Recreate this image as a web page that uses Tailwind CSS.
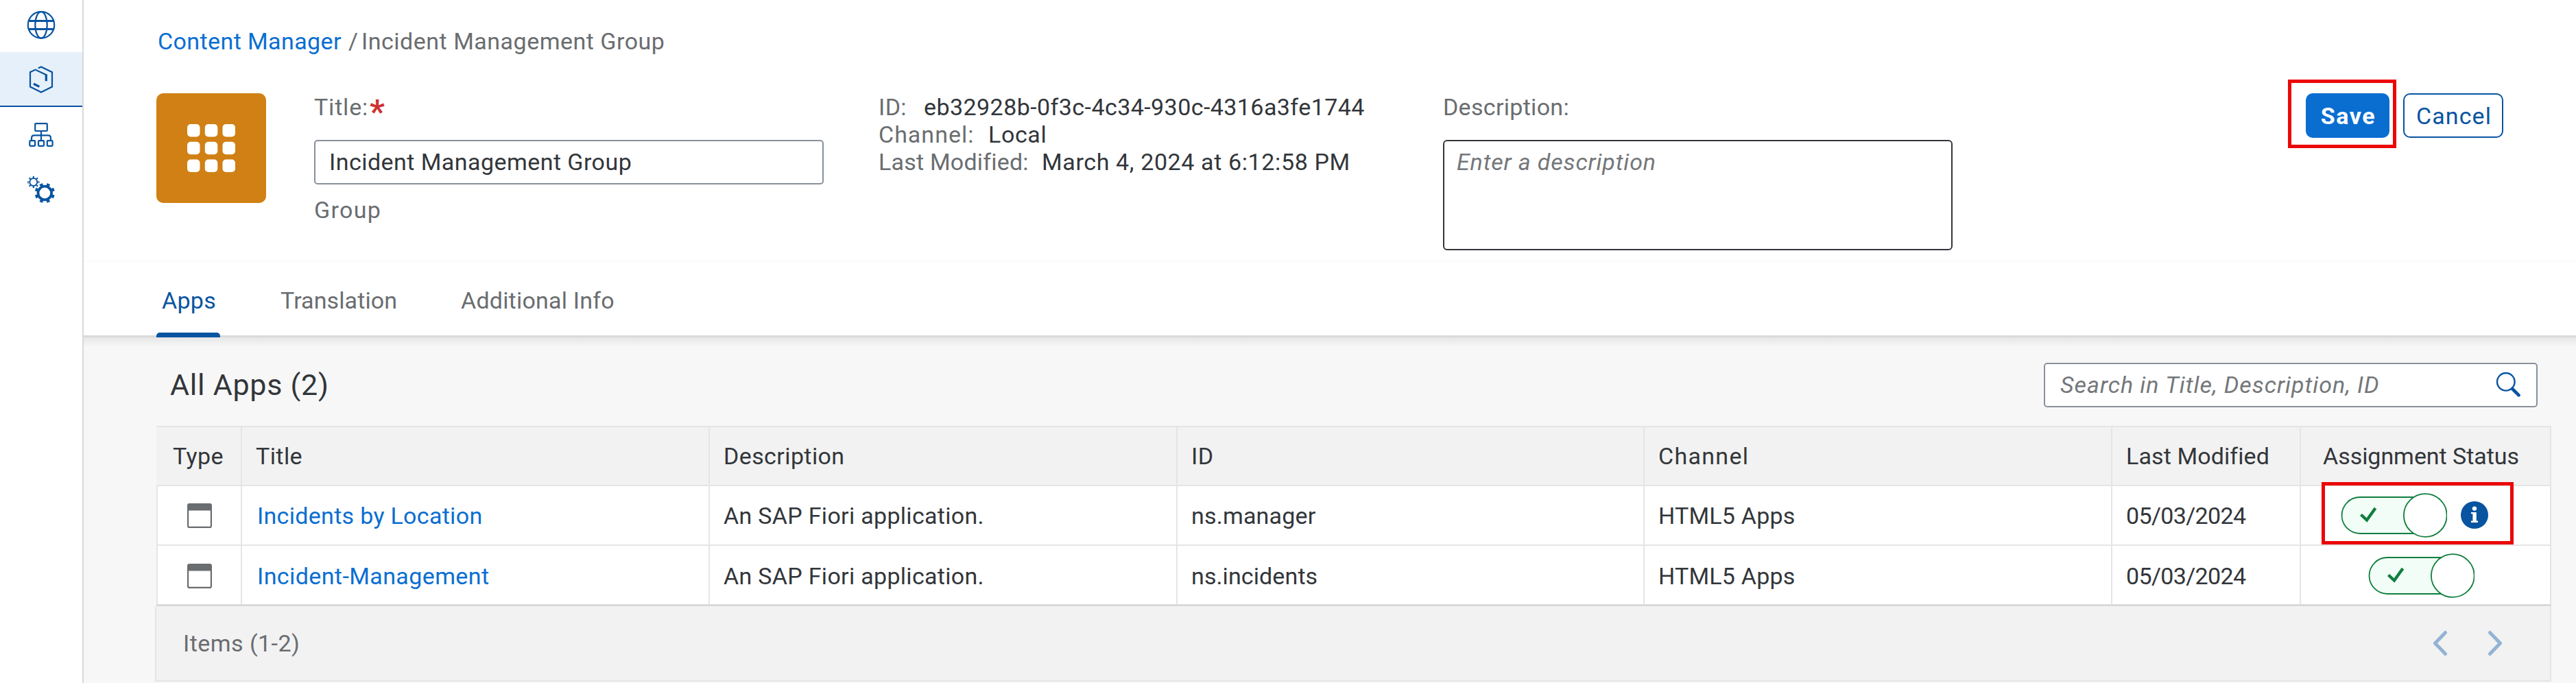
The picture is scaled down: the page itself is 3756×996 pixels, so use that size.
<!DOCTYPE html>
<html lang="en">
<head>
<meta charset="utf-8">
<title>Content Manager</title>
<script src="https://cdn.jsdelivr.net/npm/@tailwindcss/browser@4"></script>
</head>
<body class="w-[3756px] h-[996px] overflow-hidden flex bg-white font-[Roboto,sans-serif] text-[34px] leading-[40px] tracking-[0.4px] text-[#32363a] whitespace-nowrap">

<nav class="w-[122px] h-full shrink-0 border-r-2 border-[#d9d9d9] bg-white text-[#0854a0]">
  <a class="flex h-[76px] justify-center pt-[14px]">
    <svg class="w-11 h-11" viewBox="0 0 44 44" fill="none" stroke="currentColor" stroke-width="2.2"><circle cx="22" cy="22.4" r="19.2"/><ellipse cx="22" cy="22.4" rx="8.7" ry="19.2"/><path d="M4 16.4H40M4 28.4H40" stroke-width="3"/></svg>
  </a>
  <a class="flex h-20 justify-center pt-[18px] bg-[#e5f0fa] border-b-2 border-[#0854a0]">
    <svg class="w-11 h-11" viewBox="0 0 44 44" fill="none" stroke="currentColor" stroke-width="2.2"><path d="M17.8 5.4L22 3.4L38 11.2V32.6L22 40.6L6 32.6V11.2L13.5 7.6L29.5 15.2V18"/><path d="M29.3 14.5V24.2M11 28.2L19.4 32.4" stroke-width="3.2"/></svg>
  </a>
  <a class="flex h-20 justify-center pt-[18px]">
    <svg class="w-11 h-11" viewBox="0 0 44 44" fill="none" stroke="currentColor" stroke-width="2.2"><rect x="13.2" y="6.2" width="17.6" height="10.8" rx="1"/><path d="M22 17V31M8 31V27.5Q8 23.4 12 23.4H32Q36 23.4 36 27.5V31"/><rect x="5.3" y="31.2" width="7.8" height="7.6" rx="1"/><rect x="18" y="31.2" width="8" height="7.6" rx="1"/><rect x="30.8" y="31.2" width="7.8" height="7.6" rx="1"/></svg>
  </a>
  <a class="flex h-20 justify-center pt-[18px]">
    <svg class="w-11 h-11" viewBox="0 0 44 44" fill="none" stroke="currentColor"><circle cx="10.8" cy="11.5" r="5.5" stroke-width="1.9"/><circle cx="10.8" cy="11.5" r="7.4" stroke-width="2.6" pathLength="80" stroke-dasharray="3.6 6.4" transform="rotate(-8.1 10.8 11.5)"/><circle cx="27.3" cy="27.5" r="9.8" stroke-width="3.8"/><circle cx="27.3" cy="27.5" r="12.9" stroke-width="3.6" pathLength="80" stroke-dasharray="4.6 5.4" transform="rotate(12.1 27.3 27.5)"/></svg>
  </a>
</nav>

<main class="flex-1 flex flex-col bg-[#f7f7f7]">
  <header class="h-[382px] shrink-0 bg-white border-b-2 border-[#fbfbfb] pl-[106px] pt-10">
    <div class="flex">
      <a class="w-[282px] pl-[2px] text-[#0a6ed1]">Content Manager</a><span class="w-[18px] -ml-[2px] mr-[1px] text-[#6a6d70]">/</span><span class="text-[#6a6d70] tracking-[0.5px]">Incident Management Group</span>
    </div>
    <div class="flex mt-14">
      <div class="w-40 h-40 rounded-[10px] bg-[#d08014] flex items-center justify-center">
        <svg class="w-[70px] h-[70px]" viewBox="0 0 70 70" fill="#fff"><rect width="18.5" height="18.5" rx="5"/><rect x="25.8" width="18.5" height="18.5" rx="5"/><rect x="51.5" width="18.5" height="18.5" rx="5"/><rect y="25.8" width="18.5" height="18.5" rx="5"/><rect x="25.8" y="25.8" width="18.5" height="18.5" rx="5"/><rect x="51.5" y="25.8" width="18.5" height="18.5" rx="5"/><rect y="51.5" width="18.5" height="18.5" rx="5"/><rect x="25.8" y="51.5" width="18.5" height="18.5" rx="5"/><rect x="51.5" y="51.5" width="18.5" height="18.5" rx="5"/></svg>
      </div>
      <div class="w-[743px] ml-[70px] text-[#6a6d70]">
        <div class="flex"><span class="w-[81px] tracking-[0.8px]">Title:</span><span class="text-[#cc3333] font-bold text-[48px] pt-[7px] h-10">*</span></div>
        <div class="mt-7 h-[65px] border-2 border-[#89919a] rounded-[5px] bg-white pl-5 pt-[10px] text-[#32363a] tracking-[0.45px]">Incident Management Group</div>
        <div class="mt-[17px] tracking-[1.3px]">Group</div>
      </div>
      <dl class="w-[823px] pl-[80px]">
        <div class="flex"><dt class="w-[66px] text-[#6a6d70]">ID:</dt><dd class="tracking-[0.43px]">eb32928b-0f3c-4c34-930c-4316a3fe1744</dd></div>
        <div class="flex"><dt class="w-[160px] text-[#6a6d70] tracking-[1px]">Channel:</dt><dd class="tracking-[0.6px]">Local</dd></div>
        <div class="flex"><dt class="w-[238px] text-[#6a6d70] tracking-[0.2px]">Last Modified:</dt><dd class="tracking-[0.62px]">March 4, 2024 at 6:12:58 PM</dd></div>
      </dl>
      <div class="w-[743px] ml-[80px] text-[#6a6d70]">
        <div class="tracking-[0.3px]">Description:</div>
        <div class="mt-7 h-[161px] border-2 border-[#32363a] rounded-[6px] bg-white pl-[18px] pt-[10px] italic text-[#74777a] tracking-[0.84px]">Enter a description</div>
      </div>
      <div class="relative flex ml-[515px] gap-5">
        <button class="w-[122px] h-[65px] rounded-[10px] bg-[#0a6ed1] text-white font-bold pt-px pl-[2px] tracking-[1.6px]">Save</button>
        <button class="w-[146px] h-[65px] rounded-[10px] border-2 border-[#0854a0] text-[#0854a0] pt-px pl-[2px] tracking-[1.1px]">Cancel</button>
        <div class="absolute -left-[26px] -top-5 w-[158px] h-[100px] border-[5px] border-[#eb0707]"></div>
      </div>
    </div>
  </header>

  <div class="h-[110px] shrink-0 flex pl-[106px] bg-white border-b-[3px] border-[#dadada] text-[#6a6d70]">
    <div class="relative w-[93px] h-[107px] pt-9 pl-2 text-[#0854a0] tracking-[0.3px]">Apps<div class="absolute left-0 -bottom-[3px] w-[93px] h-[7px] rounded-t-[5px] bg-[#0854a0]"></div></div>
    <div class="pt-9 ml-[88px] w-[261px] tracking-[0.1px]">Translation</div>
    <div class="pt-9 ml-[2px] tracking-[0.2px]">Additional Info</div>
  </div>
  <div class="h-[14px] shrink-0 bg-linear-to-b from-[#e6e6e6] to-[#f7f7f7]"></div>

  <section class="w-[3494px] ml-[104px]">
    <div class="flex mt-[23px] h-[92px]">
      <h1 class="pl-[22px] pt-[7px] text-[43px] leading-[50px] tracking-[0.75px]">All Apps (2)</h1>
      <div class="ml-auto mr-5 w-[720px] h-[65px] flex justify-between border-2 border-[#89919a] rounded-[5px] bg-white pl-[22px] pr-[20px] pt-[10px] italic text-[#74777a] tracking-[0.96px]">Search in Title, Description, ID
        <svg class="w-10 h-10" viewBox="0 0 40 40" fill="none" stroke="#0854a0"><circle cx="15.8" cy="15.8" r="12.8" stroke-width="2.4"/><path d="M25.2 26L34.6 35.4" stroke-width="4.6" stroke-linecap="round"/></svg>
      </div>
    </div>

    <div class="ml-[2px] border-t-2 border-[#e5e5e5]">
      <div class="grid grid-cols-[125px_682px_682px_681px_682px_275px_365px] h-[86px] bg-[#f2f2f2] border-b-2 border-[#e5e5e5] *:border-r-2 *:border-[#e5e5e5] *:pt-[22px]">
        <div class="pl-6">Type</div><div class="pl-5">Title</div><div class="pl-5">Description</div><div class="pl-5">ID</div><div class="pl-5 tracking-[1.3px]">Channel</div><div class="pl-5 tracking-[0.1px]">Last Modified</div><div class="pl-8 tracking-[-0.05px]">Assignment Status</div>
      </div>
      <div class="grid grid-cols-[125px_682px_682px_681px_682px_275px_365px] h-[87px] bg-white border-b-2 border-[#e5e5e5] *:border-r-2 *:border-[#e5e5e5] *:pt-[23px]">
        <div class="border-l-2 pl-[43px]"><svg class="w-9 h-9 mt-[2px]" viewBox="0 0 36 36"><rect x="1.1" y="1.1" width="33.8" height="33.8" rx="2" fill="none" stroke="#6a6d70" stroke-width="2.2"/><path d="M1 2H35V10.5H1Z" fill="#6a6d70"/></svg></div>
        <div class="pl-[22px] text-[#0a6ed1] tracking-[0.3px]">Incidents by Location</div><div class="pl-5 tracking-[0.3px]">An SAP Fiori application.</div><div class="pl-5 tracking-[0.2px]">ns.manager</div><div class="pl-5 tracking-[0.2px]">HTML5 Apps</div><div class="pl-[20px] tracking-[-0.66px]">05/03/2024</div>
        <div class="relative">
          <div class="flex items-center gap-5 pl-[58px] -mt-[14px]">
            <svg class="w-[155px] h-[66px]" viewBox="0 0 155 66" stroke="#107e3e" stroke-width="1.8"><path d="M124 7H28A26.5 26.5 0 0 0 28 60H124Z" fill="#f1fdf6"/><circle cx="123.3" cy="33.5" r="31.4" fill="#fff"/><path d="M29.5 32.5L38 40.5L50.5 23" fill="none" stroke-width="4.4"/></svg>
            <svg class="w-10 h-10" viewBox="0 0 40 40"><circle cx="20" cy="20" r="20" fill="#0854a0"/><circle cx="20" cy="10.6" r="3.2" fill="#fff"/><path d="M15 16H22.8V28.6H25V31H15V28.6H17.4V18.2H15Z" fill="#fff"/></svg>
          </div>
          <div class="absolute left-[30px] -top-[6px] w-[280px] h-[91px] border-[5px] border-[#eb0707]"></div>
        </div>
      </div>
      <div class="grid grid-cols-[125px_682px_682px_681px_682px_275px_365px] h-[88px] bg-white border-b-[3px] border-[#d9d9d9] *:border-r-2 *:border-[#e5e5e5] *:pt-[24px]">
        <div class="border-l-2 pl-[43px]"><svg class="w-9 h-9 mt-[2px]" viewBox="0 0 36 36"><rect x="1.1" y="1.1" width="33.8" height="33.8" rx="2" fill="none" stroke="#6a6d70" stroke-width="2.2"/><path d="M1 2H35V10.5H1Z" fill="#6a6d70"/></svg></div>
        <div class="pl-[22px] text-[#0a6ed1]">Incident-Management</div><div class="pl-5 tracking-[0.3px]">An SAP Fiori application.</div><div class="pl-5 tracking-[0.1px]">ns.incidents</div><div class="pl-5 tracking-[0.2px]">HTML5 Apps</div><div class="pl-[20px] tracking-[-0.66px]">05/03/2024</div>
        <div>
          <svg class="w-[155px] h-[66px] ml-[98px] -mt-[14px]" viewBox="0 0 155 66" stroke="#107e3e" stroke-width="1.8"><path d="M124 7H28A26.5 26.5 0 0 0 28 60H124Z" fill="#f1fdf6"/><circle cx="123.3" cy="33.5" r="31.4" fill="#fff"/><path d="M29.5 32.5L38 40.5L50.5 23" fill="none" stroke-width="4.4"/></svg>
        </div>
      </div>
    </div>
    <div class="h-[110px] flex items-center justify-between bg-[#f2f2f2] border-2 border-t-0 border-[#e5e5e5] pl-[39px] pr-[68px] text-[#6a6d70] tracking-[0.45px]">Items (1-2)
      <div class="flex gap-[56px]">
        <svg class="w-6 h-10" viewBox="0 0 24 40" fill="none" stroke="#93b3d4" stroke-width="5" stroke-linecap="round" stroke-linejoin="round"><path d="M19.5 4.5L4.5 20L19.5 35.5"/></svg>
        <svg class="w-6 h-10" viewBox="0 0 24 40" fill="none" stroke="#93b3d4" stroke-width="5" stroke-linecap="round" stroke-linejoin="round"><path d="M4.5 4.5L19.5 20L4.5 35.5"/></svg>
      </div>
    </div>
  </section>
</main>
</body>
</html>
